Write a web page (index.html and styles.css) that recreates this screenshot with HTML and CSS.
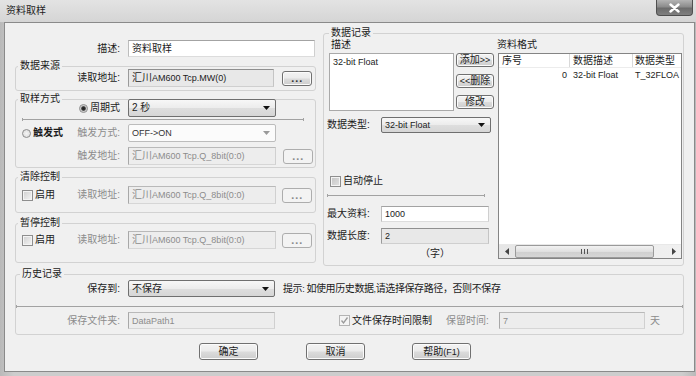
FILE: index.html
```html
<!DOCTYPE html>
<html lang="zh-CN">
<head>
<meta charset="utf-8">
<title>资料取样</title>
<link rel="stylesheet" href="styles.css">
</head>
<body>
<div class="window">
  <div class="titlebar">
    <span class="title">资料取样</span>
    <span class="close"><svg width="13" height="10" viewBox="0 0 13 10"><path d="M2.5 1.5 L10.5 8.5 M10.5 1.5 L2.5 8.5" stroke="#fff" stroke-width="2.4" stroke-linecap="round"/></svg></span>
  </div>
  <div class="client">
    <div class="top">
      <div class="left">
        <div class="row r17">
          <span class="lab lab105">描述:</span>
          <span class="tb white ctl w187">资料取样</span>
        </div>

        <fieldset class="grp g-src">
          <legend>数据来源</legend>
          <div class="row r18 mt-3">
            <span class="lab">读取地址:</span>
            <span class="tb ro ctl w146">汇川<span class="en">AM600 Tcp.MW(0)</span></span>
            <span class="btn dots m8">...</span>
          </div>
        </fieldset>

        <fieldset class="grp g-mode">
          <legend>取样方式</legend>
          <div class="row r18 mt-6">
            <span class="lab"><span class="radio on"></span><span class="rtext">周期式</span></span>
            <span class="sel ctl w148"><span>2 秒</span><svg class="arrow" width="7" height="4" viewBox="0 0 7 4"><path d="M0 0H7L3.5 4Z" fill="#111"/></svg></span>
          </div>
          <div class="sep sep-mode"></div>
          <div class="row r18 mt4">
            <span class="lab spread"><span class="rgrp"><span class="radio"></span><span class="rtext b">触发式</span></span><span class="dim">触发方式:</span></span>
            <span class="sel dis ctl w148"><span class="en">OFF-&gt;ON</span><svg class="arrow" width="7" height="4" viewBox="0 0 7 4"><path d="M0 0H7L3.5 4Z" fill="#9a9a9a"/></svg></span>
          </div>
          <div class="row r18 mt5">
            <span class="lab dim">触发地址:</span>
            <span class="tb dtb ctl w148">汇川<span class="en">AM600 Tcp.Q_8bit(0:0)</span></span>
            <span class="btn dots dis m7">...</span>
          </div>
        </fieldset>

        <fieldset class="grp g-clr">
          <legend>清除控制</legend>
          <div class="row r18 mt3">
            <span class="lab spread"><span class="rgrp"><span class="chk"></span><span class="rtext">启用</span></span><span class="dim">读取地址:</span></span>
            <span class="tb dtb ctl w148">汇川<span class="en">AM600 Tcp.Q_8bit(0:0)</span></span>
            <span class="btn dots dis m6">...</span>
          </div>
        </fieldset>

        <fieldset class="grp g-pause">
          <legend>暂停控制</legend>
          <div class="row r18 mt2">
            <span class="lab spread"><span class="rgrp"><span class="chk"></span><span class="rtext">启用</span></span><span class="dim">读取地址:</span></span>
            <span class="tb dtb ctl w148">汇川<span class="en">AM600 Tcp.Q_8bit(0:0)</span></span>
            <span class="btn dots dis m6">...</span>
          </div>
        </fieldset>
      </div>

      <fieldset class="grp g-data">
        <legend>数据记录</legend>
        <div class="data-in">
          <div class="mid">
            <div class="cap">描述</div>
            <div class="editrow">
              <div class="memo"><span class="en">32-bit Float</span></div>
              <div class="btncol">
                <span class="btn sbtn">添加<span class="en">&gt;&gt;</span></span>
                <span class="btn sbtn"><span class="en">&lt;&lt;</span>删除</span>
                <span class="btn sbtn">修改</span>
              </div>
            </div>
            <div class="row r16 mt6">
              <span class="lab2">数据类型:</span>
              <span class="sel w110"><span class="en">32-bit Float</span><svg class="arrow" width="7" height="4" viewBox="0 0 7 4"><path d="M0 0H7L3.5 4Z" fill="#111"/></svg></span>
            </div>
            <div class="row r12 auto">
              <span class="chk gray"></span><span class="rtext">自动停止</span>
            </div>
            <div class="sep sep-mid"></div>
            <div class="row r16 mt10">
              <span class="lab2">最大资料:</span>
              <span class="tb white w108"><span class="en">1000</span></span>
            </div>
            <div class="row r16 mt6">
              <span class="lab2">数据长度:</span>
              <span class="tb ro w108"><span class="en">2</span></span>
            </div>
            <div class="unit">（字）</div>
          </div>
          <div class="rcol">
            <div class="cap">资料格式</div>
            <div class="list">
              <div class="lrow lhead">
                <span class="c1">序号</span><span class="c2">数据描述</span><span class="c3">数据类型</span>
              </div>
              <div class="lrow">
                <span class="c1 num en">0</span><span class="c2 en">32-bit Float</span><span class="c3 en">T_32FLOA</span>
              </div>
              <div class="lfill"></div>
              <div class="hscroll">
                <span class="sarrow"><svg width="4" height="7" viewBox="0 0 4 7"><path d="M4 0V7L0 3.5Z" fill="#444"/></svg></span>
                <span class="thumb"><svg width="7" height="5" viewBox="0 0 7 5"><path d="M0.5 0V5M3.5 0V5M6.5 0V5" stroke="#555" stroke-width="1"/></svg></span>
                <span class="strack"></span>
                <span class="sarrow"><svg width="4" height="7" viewBox="0 0 4 7"><path d="M0 0V7L4 3.5Z" fill="#444"/></svg></span>
              </div>
            </div>
          </div>
        </div>
      </fieldset>
    </div>

    <fieldset class="grp g-hist">
      <legend>历史记录</legend>
      <div class="row r17">
        <span class="lab">保存到:</span>
        <span class="sel ctl w147"><span>不保存</span><svg class="arrow" width="7" height="4" viewBox="0 0 7 4"><path d="M0 0H7L3.5 4Z" fill="#111"/></svg></span>
        <span class="hint">提示<span class="en">: </span>如使用历史数据<span class="en">,</span>请选择保存路径，否则不保存</span>
      </div>
      <div class="sep sep-hist"></div>
      <div class="row r17 mt5">
        <span class="lab dim">保存文件夹:</span>
        <span class="tb dtb ctl w147"><span class="en">DataPath1</span></span>
        <span class="chk dis ck-save"><svg width="9" height="9" viewBox="0 0 9 9"><path d="M1.5 4.5 L3.5 7 L7.5 1.5" fill="none" stroke="#9a9a9a" stroke-width="1.3"/></svg></span>
        <span class="ck-text">文件保存时间限制</span>
        <span class="dim keep">保留时间:</span>
        <span class="tb dtb w146"><span class="en">7</span></span>
        <span class="dim day">天</span>
      </div>
    </fieldset>

    <div class="btnrow">
      <span class="btn dlg b1">确定</span>
      <span class="btn dlg b2">取消</span>
      <span class="btn dlg b3">帮助<span class="en">(F1)</span></span>
    </div>
  </div>
</div>
</body>
</html>
```

FILE: styles.css
```css
* { box-sizing: border-box; }
html, body { margin: 0; padding: 0; background: #c9c9c9; }
body {
  font: 10px/12px "Liberation Sans", "Noto Sans CJK SC", sans-serif;
  color: #1b1b1b;
}
.en { font-size: 9px; }

.window {
  width: 696px; height: 376px; overflow: hidden;
  display: flex; flex-direction: column;
  background: linear-gradient(90deg, #b9b9b9, #cdcdcd 2%, #cdcdcd 98%, #b9b9b9);
}
.titlebar {
  height: 22px; flex: none;
  display: flex; align-items: flex-start;
  padding-left: 6px;
  background: linear-gradient(180deg, #e3e3e3, #d5d5d5);
}
.title { margin-top: 5px; color: #1e1e1e; }
.close {
  margin-left: auto; margin-right: 3px;
  width: 37px; height: 16px;
  border: 1px solid #4f4f4f; border-top: 0;
  border-radius: 0 0 4px 4px;
  background: linear-gradient(#b4b4b4, #8c8c8c 45%, #6c6c6c 55%, #808080);
  display: flex; align-items: center; justify-content: center;
}

.client {
  flex: none;
  width: 691px; height: 350px;
  margin-left: 4px;
  border: 1px solid #8a8a8a;
  background: #f0f0f0;
  padding-left: 10px;
}
.top { display: flex; align-items: flex-start; }
.left { width: 301px; flex: none; margin-top: 17px; display: flex; flex-direction: column; }

.row { display: flex; align-items: center; flex: none; }
.r12 { height: 12px; } .r16 { height: 16px; } .r17 { height: 17px; } .r18 { height: 18px; }
.mt-6 { margin-top: -6px; } .mt-3 { margin-top: -3px; }
.mt2 { margin-top: 2px; } .mt3 { margin-top: 3px; } .mt4 { margin-top: 4px; }
.mt5 { margin-top: 5px; } .mt6 { margin-top: 6px; } .mt10 { margin-top: 10px; }

.lab {
  width: 104px; flex: none;
  display: flex; align-items: center; justify-content: flex-end;
  white-space: nowrap;
}
.lab105 { width: 105px; }
.lab.spread { justify-content: space-between; padding-left: 6px; }
.rgrp { display: flex; align-items: center; }
.rtext { margin-left: 2px; }
.b { font-weight: bold; }
.dim { color: #8c8c8c; }
.ctl { margin-left: 8px; }

.w108 { width: 108px; } .w110 { width: 110px; } .w146 { width: 146px; }
.w147 { width: 147px; } .w148 { width: 148px; } .w187 { width: 187px; }

.tb {
  flex: none; height: 100%;
  display: flex; align-items: center;
  padding-left: 3px;
  white-space: nowrap; overflow: hidden;
  border: 1px solid #b5b5b5;
}
.white { background: #fff; border-color: #a3a3a3 #cfcfcf #dcdcdc #bdbdbd; }
.ro { background: #e8e8e8; border-color: #8f8f8f #c4c4c4 #cfcfcf #9a9a9a; }
.dtb { background: #ededed; color: #8c8c8c; border-color: #b9b9b9 #d0d0d0 #d6d6d6 #a8a8a8; }

.sel {
  flex: none; height: 100%;
  display: flex; align-items: center; justify-content: space-between;
  padding: 0 5px 0 3px;
  border: 1px solid #6f6f6f; border-radius: 2px;
  background: linear-gradient(#f7f7f7, #ececec 50%, #dedede 51%, #d6d6d6);
  white-space: nowrap;
}
.sel.dis { background: #fbfbfb; border-color: #bcbcbc; color: #333; }
.arrow { flex: none; }

.btn {
  flex: none;
  display: flex; align-items: center; justify-content: center;
  border: 1px solid #707070; border-radius: 3px;
  background: linear-gradient(#f3f3f3, #ebebeb 48%, #dcdcdc 52%, #cdcdcd);
  box-shadow: inset 0 0 0 1px #fbfbfb;
  white-space: nowrap;
}
.btn.dis { border-color: #adadad; background: #f3f3f3; color: #8a8a8a; box-shadow: none; }
.dots {
  width: 30px; height: 15px;
  font: bold 9px/9px "DejaVu Sans", sans-serif;
  letter-spacing: 0.5px;
  padding-top: 2px;
  color: #333;
}
.m6 { margin-left: 6px; } .m7 { margin-left: 7px; } .m8 { margin-left: 8px; }

.radio {
  flex: none; width: 9px; height: 9px; border-radius: 50%;
  border: 1px solid #8d8d8d;
  background: radial-gradient(circle, #f4f4f4 0, #d8d8d8 100%);
}
.radio.on { background: radial-gradient(circle, #222 0, #333 1.8px, #bdbdbd 2.6px, #f2f2f2 4px); }
.chk {
  flex: none; width: 11px; height: 11px;
  border: 1px solid #8e8e8e;
  background: linear-gradient(135deg, #cfcfcf, #f6f6f6);
  box-shadow: inset 0 0 0 1px #f4f4f4;
  display: flex; align-items: center; justify-content: center;
}
.chk.gray { background: linear-gradient(135deg, #c4c4c4, #e2e2e2); }
.chk.dis { border-color: #b4b4b4; background: #f4f4f4; box-shadow: none; }

/* group boxes */
.grp {
  margin: 0; padding: 0; min-width: 0;
  border: 1px solid #d2d2d2; border-radius: 3px;
}
.grp > legend {
  padding: 0 2px; margin-left: 2px;
  line-height: 12px; color: #1b1b1b;
}
.g-src { margin-top: 3px; padding-bottom: 3px; }
.g-mode { margin-top: 2px; padding-bottom: 2px; }
.g-clr { margin-top: 3px; padding-bottom: 8px; }
.g-pause { margin-top: 4px; padding-bottom: 13px; }

.sep { flex: none; height: 1px; background: #a2a2a2; position: relative; }
.sep::before, .sep::after {
  content: ""; position: absolute; top: -1px; width: 1px; height: 3px; background: #a2a2a2;
}
.sep::before { left: 0; } .sep::after { right: 0; }
.sep-mode { margin: 2px 0 0 6px; width: 282px; }

.g-data { width: 361px; flex: none; margin: 4px 0 0 7px; padding-bottom: 5px; }
.g-data > legend { margin-left: 5px; }
.data-in { display: flex; }
.mid { width: 170px; flex: none; padding-left: 3px; display: flex; flex-direction: column; }
.cap { flex: none; }
.mid > .cap { margin-left: 4px; }
.editrow { display: flex; margin: 2px 0 0 2px; }
.memo {
  width: 125px; height: 58px; flex: none;
  background: #fff; border: 1px solid #a9a9a9;
  padding: 2px 3px;
}
.btncol { margin-left: 2px; display: flex; flex-direction: column; gap: 7px; }
.sbtn { width: 38px; height: 14px; }
.lab2 { width: 54px; flex: none; white-space: nowrap; }
.auto { margin-top: 42px; padding-left: 3px; }
.sep-mid { margin-top: 8px; width: 158px; }
.unit { margin: 4px 0 0 93px; }

.rcol { width: 188px; flex: none; display: flex; flex-direction: column; }
.rcol > .cap { margin-left: 3px; }
.list {
  margin: 2px 0 0 4px;
  width: 184px; height: 206px;
  border: 1px solid #848484; background: #fff;
  display: flex; flex-direction: column;
  overflow: hidden;
}
.lrow { display: flex; height: 14px; flex: none; align-items: center; white-space: nowrap; }
.lhead { border-bottom: 1px solid #ececec; }
.lhead span { border-right: 1px solid #d9d9d9; height: 100%; display: flex; align-items: center; }
.c1 { width: 71px; flex: none; padding-left: 3px; }
.c2 { width: 63px; flex: none; padding-left: 3px; }
.c3 { flex: 1; min-width: 0; padding-left: 2px; overflow: hidden; }
.lhead .c3 { border-right: 0; }
.num { text-align: right; padding: 0 3px 0 0; }
.lrow .num { display: block; }
.lfill { flex: 1; }
.hscroll {
  height: 14px; flex: none; display: flex; align-items: stretch;
  background: linear-gradient(90deg, #e6e6e6, #f0f0f0);
  border-top: 1px solid #e8e8e8;
}
.sarrow { width: 15px; flex: none; display: flex; align-items: center; justify-content: center; }
.thumb {
  width: 139px; flex: none; margin: 0 1px;
  border: 1px solid #9a9a9a; border-radius: 2px;
  background: linear-gradient(#f2f2f2, #e0e0e0 50%, #cfcfcf 51%, #d6d6d6);
  display: flex; align-items: center; justify-content: center;
}
.strack { flex: 1; }

.g-hist { width: 669px; margin-top: 2px; padding-bottom: 5px; }
.g-hist > legend { margin-left: 4px; }
.hint { margin-left: 8px; white-space: nowrap; letter-spacing: -0.4px; }
.sep-hist { margin-top: 9px; width: 100%; }
.ck-save { margin-left: 64px; }
.ck-text { width: 94px; flex: none; margin-left: 2px; white-space: nowrap; }
.keep { width: 53px; flex: none; white-space: nowrap; }
.day { margin-left: 5px; }

.btnrow { display: flex; margin-top: 8px; height: 17px; }
.dlg { width: 59px; height: 17px; }
.b1 { margin-left: 184px; }
.b2 { margin-left: 48px; }
.b3 { margin-left: 47px; }
```
